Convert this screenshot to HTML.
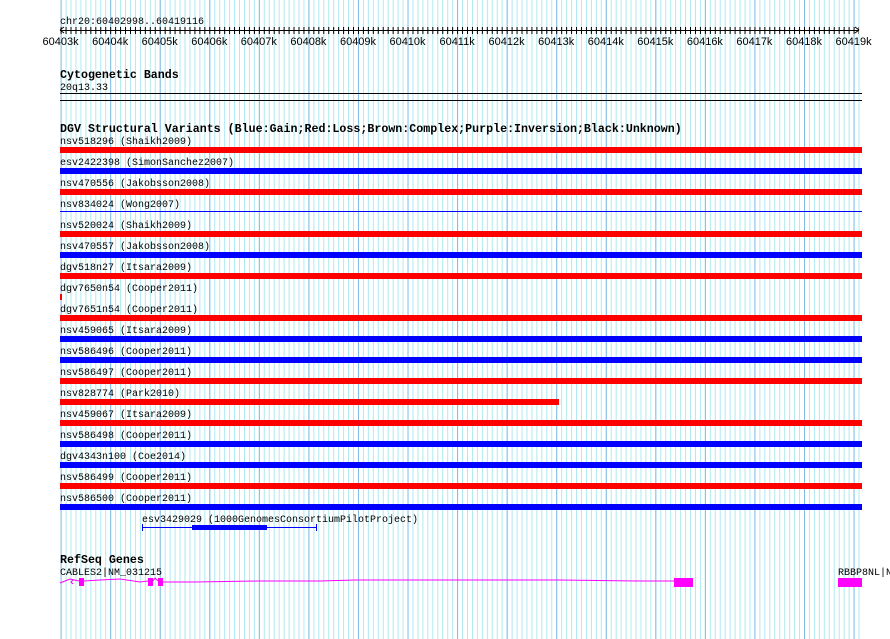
<!DOCTYPE html>
<html><head><meta charset="utf-8"><style>
html,body{margin:0;padding:0;background:#fff;width:890px;height:639px;overflow:hidden}
svg{display:block}
.m{font-family:"Liberation Mono",monospace;font-size:10px;fill:#000}
.b{font-family:"Liberation Mono",monospace;font-size:11.65px;font-weight:bold;fill:#000}
.s{font-family:"Liberation Sans",sans-serif;font-size:11px;fill:#000}
</style></head><body>
<svg width="890" height="639" xmlns="http://www.w3.org/2000/svg">
<defs>
<pattern id="minor" x="60.6" y="0" width="4.956" height="639" patternUnits="userSpaceOnUse">
<rect x="0" y="0" width="1" height="639" fill="#aeeaf0"/>
</pattern>
<pattern id="major" x="60.6" y="0" width="49.56" height="639" patternUnits="userSpaceOnUse">
<rect x="0" y="0" width="1" height="639" fill="#80bce8"/>
</pattern>
<pattern id="tick" x="60.6" y="0" width="4.956" height="639" patternUnits="userSpaceOnUse">
<rect x="0" y="27" width="1" height="7" fill="#000"/>
</pattern>
</defs>
<rect x="60" y="0" width="801" height="639" fill="url(#minor)"/>
<rect x="60" y="0" width="801" height="639" fill="url(#major)"/>
<text class="m" x="60" y="24">chr20:60402998..60419116</text>
<rect x="60" y="30" width="799" height="1" fill="#000"/>
<rect x="60" y="0" width="799" height="639" fill="url(#tick)"/>
<path d="M60 30 l4 -3 M60 30 l4 3 M859 30 l-4 -3 M859 30 l-4 3" stroke="#000" stroke-width="1"/>
<g class="s" text-anchor="middle">
<text x="60.6" y="45">60403k</text><text x="110.2" y="45">60404k</text><text x="159.7" y="45">60405k</text><text x="209.3" y="45">60406k</text><text x="258.8" y="45">60407k</text><text x="308.4" y="45">60408k</text><text x="358" y="45">60409k</text><text x="407.5" y="45">60410k</text><text x="457.1" y="45">60411k</text><text x="506.6" y="45">60412k</text><text x="556.2" y="45">60413k</text><text x="605.8" y="45">60414k</text><text x="655.3" y="45">60415k</text><text x="704.9" y="45">60416k</text><text x="754.4" y="45">60417k</text><text x="804" y="45">60418k</text><text x="853.6" y="45">60419k</text>
</g>
<text class="b" x="60" y="78">Cytogenetic Bands</text>
<text class="m" x="60" y="90">20q13.33</text>
<rect x="60" y="93" width="802" height="1" fill="#000"/>
<rect x="60" y="100" width="802" height="1" fill="#000"/>
<text class="b" x="60" y="132">DGV Structural Variants (Blue:Gain;Red:Loss;Brown:Complex;Purple:Inversion;Black:Unknown)</text>
<g class="m">
<text x="60" y="144">nsv518296 (Shaikh2009)</text>
<text x="60" y="165">esv2422398 (SimonSanchez2007)</text>
<text x="60" y="186">nsv470556 (Jakobsson2008)</text>
<text x="60" y="207">nsv834024 (Wong2007)</text>
<text x="60" y="228">nsv520024 (Shaikh2009)</text>
<text x="60" y="249">nsv470557 (Jakobsson2008)</text>
<text x="60" y="270">dgv518n27 (Itsara2009)</text>
<text x="60" y="291">dgv7650n54 (Cooper2011)</text>
<text x="60" y="312">dgv7651n54 (Cooper2011)</text>
<text x="60" y="333">nsv459065 (Itsara2009)</text>
<text x="60" y="354">nsv586496 (Cooper2011)</text>
<text x="60" y="375">nsv586497 (Cooper2011)</text>
<text x="60" y="396">nsv828774 (Park2010)</text>
<text x="60" y="417">nsv459067 (Itsara2009)</text>
<text x="60" y="438">nsv586498 (Cooper2011)</text>
<text x="60" y="459">dgv4343n100 (Coe2014)</text>
<text x="60" y="480">nsv586499 (Cooper2011)</text>
<text x="60" y="501">nsv586500 (Cooper2011)</text>
</g>
<g>
<rect x="60" y="147" width="802" height="6" fill="#f00"/>
<rect x="60" y="168" width="802" height="6" fill="#00f"/>
<rect x="60" y="189" width="802" height="6" fill="#f00"/>
<rect x="60" y="211" width="802" height="1" fill="#00f"/>
<rect x="60" y="231" width="802" height="6" fill="#f00"/>
<rect x="60" y="252" width="802" height="6" fill="#00f"/>
<rect x="60" y="273" width="802" height="6" fill="#f00"/>
<rect x="60" y="294" width="2" height="6" fill="#f00"/>
<rect x="60" y="315" width="802" height="6" fill="#f00"/>
<rect x="60" y="336" width="802" height="6" fill="#00f"/>
<rect x="60" y="357" width="802" height="6" fill="#00f"/>
<rect x="60" y="378" width="802" height="6" fill="#f00"/>
<rect x="60" y="399" width="499" height="6" fill="#f00"/>
<rect x="60" y="420" width="802" height="6" fill="#f00"/>
<rect x="60" y="441" width="802" height="6" fill="#00f"/>
<rect x="60" y="462" width="802" height="6" fill="#00f"/>
<rect x="60" y="483" width="802" height="6" fill="#f00"/>
<rect x="60" y="504" width="802" height="6" fill="#00f"/>
</g>
<text class="m" x="142" y="522">esv3429029 (1000GenomesConsortiumPilotProject)</text>
<rect x="142" y="527" width="175" height="1" fill="#00f"/>
<rect x="142" y="524" width="1" height="7" fill="#00f"/>
<rect x="316" y="524" width="1" height="7" fill="#00f"/>
<rect x="192" y="525" width="75" height="5" fill="#00f"/>
<text class="b" x="60" y="563">RefSeq Genes</text>
<text class="m" x="60" y="575">CABLES2|NM_031215</text>
<text class="m" x="838" y="575">RBBP8NL|N</text>
<g fill="none" stroke="#f0f" stroke-width="1">
<polyline points="60,583 70,579 79,581"/>
<polyline points="73,580 71,582 73,584"/>
<polyline points="84,581 100,580 120,579 140,582 148,581"/>
<polyline points="153,581 155,578 158,581"/>
<polyline points="163,582 195,582 258,581 320,581 355,580 420,580 480,580 560,580 640,581 674,581"/>
</g>
<rect x="79" y="578" width="5" height="8" fill="#f0f"/>
<rect x="148" y="578" width="5" height="8" fill="#f0f"/>
<rect x="158" y="578" width="5" height="8" fill="#f0f"/>
<rect x="674" y="578" width="19" height="9" fill="#f0f"/>
<rect x="838" y="578" width="24" height="9" fill="#f0f"/>
</svg>
</body></html>
